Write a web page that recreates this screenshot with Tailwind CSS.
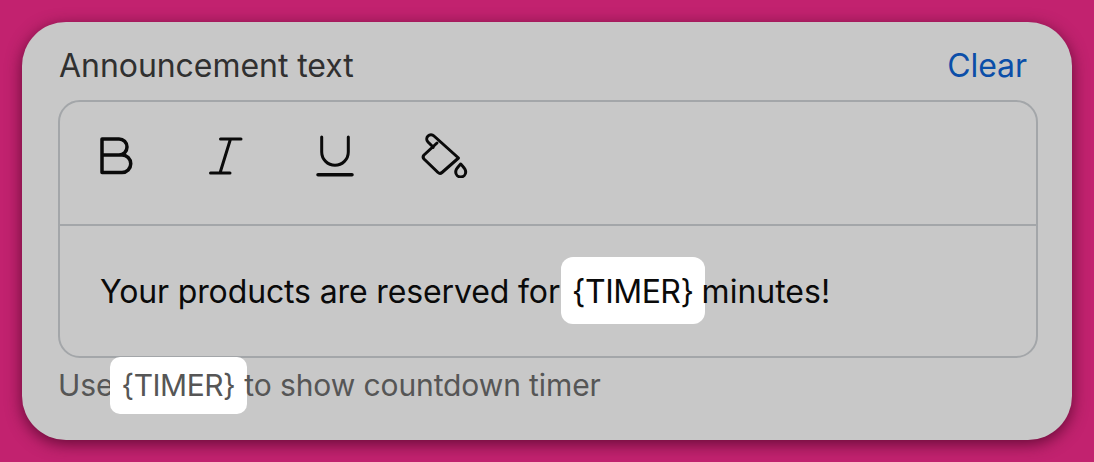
<!DOCTYPE html>
<html>
<head>
<meta charset="utf-8">
<script src="https://cdn.jsdelivr.net/npm/@tailwindcss/browser@4"></script>
</head>
<body class="m-0 bg-[#c2226f] overflow-hidden font-['Inter',sans-serif]">
<div class="w-[1094px] h-[462px] pt-[22px] pl-[22px]">
  <!-- card -->
  <div class="w-[1050px] h-[418px] rounded-[44px] bg-[#c8c8c8] shadow-[0_4px_16px_rgba(60,0,30,0.7)] pl-[36px] pr-[34px] pt-[24px]">
    <div class="flex justify-between items-center h-[38px] pt-[2px] pl-[1px] pr-[11px] text-[32px] tracking-[-0.05px]">
      <span class="text-[#303030]">Announcement text</span>
      <a class="text-[#0b4ea8]">Clear</a>
    </div>
    <div class="mt-[16px] h-[258px] rounded-[22px] border-2 border-[#a3a6a9]">
      <!-- toolbar -->
      <div class="h-[124px] border-b-2 border-[#a3a6a9] flex items-start pl-[36px] pt-[28px]">
        <svg class="w-[40px] h-[48px] mr-[68px]" viewBox="0 0 40 48" fill="none" stroke="#0a0a0a" stroke-width="3.500" stroke-linejoin="round" stroke-linecap="round">
          <path d="M6 9h17a8 8 0 0 1 0 16H6zM6 25h20a8.750 8.750 0 0 1 0 17.500H6z"/>
        </svg>
        <svg class="w-[40px] h-[48px] mr-[68px]" viewBox="0 0 40 48" fill="none" stroke="#0a0a0a" stroke-width="3" stroke-linecap="round">
          <path d="M16.500 9H37M26.500 9L16 43M6.500 43H26"/>
        </svg>
        <svg class="w-[44px] h-[48px] mr-[64px]" viewBox="0 0 44 48" fill="none" stroke="#0a0a0a" stroke-width="3" stroke-linecap="round">
          <path d="M9.700 7v15a13.300 13.300 0 0 0 26.600 0V7"/>
          <path d="M6 44.700h34" stroke-width="3.500"/>
        </svg>
        <svg class="w-[50px] h-[48px]" viewBox="0 0 50 48" fill="none" stroke="#0a0a0a" stroke-width="3" stroke-linejoin="round" stroke-linecap="round">
          <path d="M13.300 17.300L8 12a4.200 4.200 0 0 1 6-6L38.500 28L22 42.500a3 3 0 0 1-4 0L4 29a3 3 0 0 1 0-4L17 13"/>
          <path d="M40.700 34c-2 2.500-5 4.500-5 8a5 5 0 0 0 10 0c0-3.500-3-5.500-5-8z"/>
        </svg>
      </div>
      <!-- editor text -->
      <div class="flex items-center h-[130px] pl-[40px] pb-[1px] text-[32px] tracking-[-0.13px] text-[#0a0a0a]">
        <span class="pt-[2px]">Your products are reserved for</span>
        <span class="flex items-center h-[67px] pt-[2px] ml-[1px] px-[11px] bg-white rounded-[12px] tracking-[-0.5px]">{TIMER}</span>
        <span class="pt-[2px] ml-[-3px] tracking-normal">minutes!</span>
      </div>
    </div>
    <div class="flex items-center h-[57px] -mt-[1px] text-[30px] tracking-[-0.1px] text-[#565656]">
      <span>Use</span>
      <span class="flex items-center h-[57px] ml-[-3px] pl-[11px] pr-[12px] bg-white rounded-[10px] tracking-[-0.5px]">{TIMER}</span>
      <span class="ml-[-3px]">to show countdown timer</span>
    </div>
  </div>
</div>
</body>
</html>
